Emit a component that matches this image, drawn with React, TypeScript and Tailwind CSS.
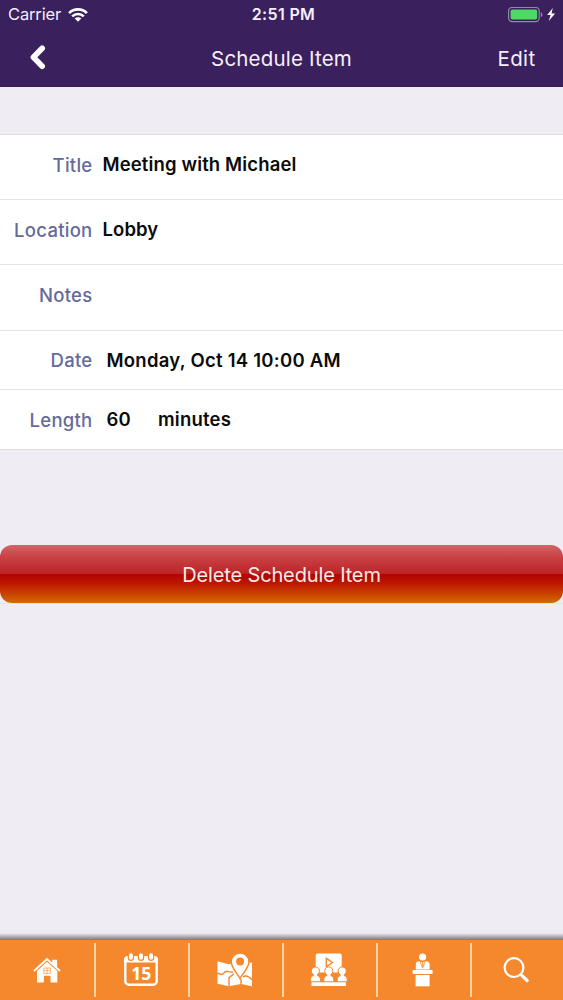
import React from "react";

function Wifi() {
  return (
    <svg className="h-[14px] w-[20px]" viewBox="0 0 20 14" fill="none" stroke="#fff" strokeWidth="2.6">
      <path d="M1.1 5.1a12.6 12.6 0 0 1 17.8 0" />
      <path d="M4.2 8.4a8.2 8.2 0 0 1 11.6 0" />
      <path d="M10 13.8 6.7 10.6a4.6 4.6 0 0 1 6.6 0z" fill="#fff" stroke="none" />
    </svg>
  );
}

function Battery() {
  return (
    <svg className="h-[16px] w-[50px]" viewBox="0 0 50 16">
      <rect x="1.6" y="0.4" width="30.6" height="14.2" rx="3.6" fill="none" stroke="#9187a8" strokeWidth="1.2" />
      <rect x="3.6" y="2.4" width="26.6" height="10.2" rx="1.8" fill="#4cd964" />
      <path d="M33.8 4.9c2.2.9 2.2 4.3 0 5.2z" fill="#9187a8" />
      <path d="M45.8 1 40.2 8h3.4l-1.8 5.9 6.3-7.3h-3.6z" fill="#fff" />
    </svg>
  );
}

function House() {
  return (
    <svg className="h-[60px] w-[94px] shrink-0" viewBox="0 0 94 60" fill="#fff">
      <path d="M52.3 19.8h4.8v8.6l-4.8-4.4z" />
      <path d="M34 31 47 19l13 12" fill="none" stroke="#fff" strokeWidth="1.9" />
      <path d="M37 31 47 21.8 57.3 31v11.4h-6.8v-6.6h-6.6v6.6H37z" />
      <path d="M43.8 28h6.6v5.6h-6.6zM47.1 28v5.6M43.8 30.8h6.6" fill="none" stroke="#f5882c" strokeWidth="0.6" />
    </svg>
  );
}

function Calendar() {
  return (
    <svg className="h-[60px] w-[94px] shrink-0" viewBox="0 0 94 60">
      <rect x="31.3" y="17.2" width="31.4" height="27.6" rx="3.6" fill="none" stroke="#fff" strokeWidth="2.4" />
      <path d="M30 22.6v-3.1q0-3.4 4-3.4h26q4 0 4 3.4v3.1z" fill="#fff" />
      <g fill="#fff" stroke="#f5882c" strokeWidth="1.2">
        <rect x="34.3" y="12.6" width="5.2" height="7.8" rx="2.6" />
        <rect x="44.4" y="12.6" width="5.2" height="7.8" rx="2.6" />
        <rect x="54.5" y="12.6" width="5.2" height="7.8" rx="2.6" />
      </g>
      <text x="47.2" y="40.2" textAnchor="middle" fill="#fff" fontFamily="Open Sans, sans-serif" fontWeight="700" fontSize="18.5" textLength="20" lengthAdjust="spacingAndGlyphs">15</text>
    </svg>
  );
}

function MapIcon() {
  return (
    <svg className="h-[60px] w-[94px] shrink-0" viewBox="0 0 94 60">
      <path d="m29.5 21.3 11 2.9 12-3 11.5 1.6v23.4l-11-2.2-12 2.2-11.5-2.4z" fill="#fff" />
      <path d="M29.5 32.8q4.5 3 6.3.4t5.2-1.6l4 .6M41 46v-8.4l5-3.8M53 39v7M55 37q4-3 9.5 3.4" fill="none" stroke="#f5882c" strokeWidth="1.4" />
      <path d="M52 38.5C49.5 33.2 43.2 28 43.2 21.8a8.9 8.9 0 0 1 17.8 0c0 6.2-6.4 11.4-9 16.7z" fill="#fff" stroke="#f5882c" strokeWidth="1.5" />
      <circle cx="52.1" cy="21.6" r="4" fill="#f5882c" />
    </svg>
  );
}

function Session() {
  return (
    <svg className="h-[60px] w-[94px] shrink-0" viewBox="0 0 94 60">
      <rect x="33.7" y="13.6" width="26" height="19" rx="2" fill="#fff" />
      <path d="m44.3 18.4 6.2 4.1-6.2 4.1z" fill="#fff" stroke="#f5882c" strokeWidth="1.4" />
      <g fill="#fff" stroke="#f5882c" strokeWidth="1">
        {[33.4, 46.8, 60.2].map((x) => (
          <g key={x} transform={`translate(${x} 0)`}>
            <path d="M-5 41.8v-2.6q0-3 3-3.7v-.9a4.1 4.1 0 1 1 4 0v.9q3 .7 3 3.7v2.6z" />
          </g>
        ))}
      </g>
      <path d="M29.5 42.2h34.4v3.8H29.5z" fill="#fff" />
    </svg>
  );
}

function Speaker() {
  return (
    <svg className="h-[60px] w-[94px] shrink-0" viewBox="0 0 94 60" fill="#fff">
      <circle cx="46.6" cy="17" r="3.6" />
      <path d="M39.8 29.4v-4.9q0-2.8 3.1-3.2l3.7 1 3.7-1q3.3.4 3.3 3.2v4.9z" />
      <path d="m44.2 21.6 2.4 6.6 2.4-6.6M46.6 22v4.6" fill="none" stroke="#f5882c" strokeWidth="0.8" />
      <rect x="36.6" y="30" width="20" height="4" rx="0.8" />
      <path d="M39.6 35h14v11.3h-14z" />
    </svg>
  );
}

function Search() {
  return (
    <svg className="h-[60px] w-[94px] shrink-0" viewBox="0 0 94 60" fill="none" stroke="#fff">
      <circle cx="44" cy="27.6" r="9.4" strokeWidth="2.2" />
      <path d="m50.7 34.6 2 1.8" strokeWidth="2.2" />
      <path d="m52.2 35.9 4.9 4.6" strokeWidth="3.3" strokeLinecap="round" />
    </svg>
  );
}

const fields = [
  { label: "Title", value: "Meeting with Michael", row: "h-[65px] border-b pt-[17px]", gap: "pl-[10px] tracking-[0.14px]", lift: "-mt-px" },
  { label: "Location", value: "Lobby", row: "h-[65px] border-b pt-[17px]", gap: "pl-[10px] tracking-[0.1px]", lift: "-mt-px" },
  { label: "Notes", value: "", row: "h-[66px] border-b pt-[17px]", gap: "pl-[10px]", lift: "" },
  { label: "Date", value: "Monday, Oct 14 10:00 AM", row: "h-[59px] border-b pt-[16px]", gap: "pl-[14px] tracking-[0.26px]", lift: "" },
  { label: "Length", value: "60", unit: "minutes", row: "h-[59px] pt-[17px]", gap: "pl-[14px] tracking-[0.2px]", lift: "-mt-px" },
];

const tabs = [House, Calendar, MapIcon, Session, Speaker, Search];

export default function App() {
  return (
    <div className="flex h-[1000px] w-[563px] flex-col overflow-hidden bg-[#efedf3] font-['Inter',sans-serif]">
      <header className="h-[87px] shrink-0 border-b border-[#3a1a58] bg-[#3a205d] text-[#f6effb]">
        <div className="grid h-[29px] grid-cols-3 items-center">
          <div className="flex items-center gap-[7px] pl-[8px] text-[16.5px] leading-[29px] tracking-[-0.15px]">
            <span>Carrier</span>
            <Wifi />
          </div>
          <div className="pl-[4px] text-center text-[16px] font-semibold leading-[29px] tracking-[0.35px]">2:51 PM</div>
          <div className="flex justify-end pr-[6px]"><Battery /></div>
        </div>
        <div className="grid h-[57px] grid-cols-3 items-center text-[20.5px]">
          <button className="pl-[28px]" aria-label="Back">
            <svg className="h-[28px] w-[20px]" viewBox="0 0 20 28" fill="none" stroke="#fff" strokeWidth="5.6" strokeLinecap="round" strokeLinejoin="round">
              <path d="M14.2 4.2 5.4 13.3l8.8 8.9" />
            </svg>
          </button>
          <h1 className="whitespace-nowrap pt-[3px] text-center tracking-[0.18px]">Schedule Item</h1>
          <button className="pr-[27.5px] pt-[3px] text-right tracking-[0.35px]">Edit</button>
        </div>
      </header>

      <main className="grow">
        <section className="mt-[47px] border-y border-[#dfdee3] bg-white text-[18.5px] leading-[26px]">
          {fields.map((f) => (
            <div key={f.label} className={`flex border-[#e3e2e6] ${f.row}`}>
              <div className="w-[92.5px] shrink-0 text-right font-[550] tracking-[0.27px] text-[#656a9b]">{f.label}</div>
              <div className={`flex font-semibold text-[#0b0b0b] ${f.gap} ${f.lift}`}>
                <span className={f.unit ? "w-[51.5px]" : ""}>{f.value}</span>
                {f.unit && <span>{f.unit}</span>}
              </div>
            </div>
          ))}
        </section>
        <div className="mt-[95px] border-b border-[#e3e2e8]">
          <button className="h-[58px] w-full rounded-[12px] bg-[linear-gradient(180deg,#d16567_0%,#c94042_22%,#bd2428_49%,#b00500_51%,#bd1600_66%,#c94200_84%,#d16c00_100%)] pt-[2px] text-[20px] tracking-[-0.14px] text-[#fce9e9]">
            Delete Schedule Item
          </button>
        </div>
      </main>

      <div className="h-[7px] shrink-0 bg-[linear-gradient(180deg,#efedf3,#b9b5bd_45%,#7f7780)]" />
      <nav className="flex h-[60px] shrink-0 bg-[#f5882c]">
        {tabs.map((Icon, i) => (
          <button key={i} className="flex w-[94px] shrink-0 items-center">
            <Icon />
            {i < 5 && <span className="h-[54px] w-[1.5px] shrink-0 bg-[#fdd2a0]" />}
          </button>
        ))}
      </nav>
    </div>
  );
}
